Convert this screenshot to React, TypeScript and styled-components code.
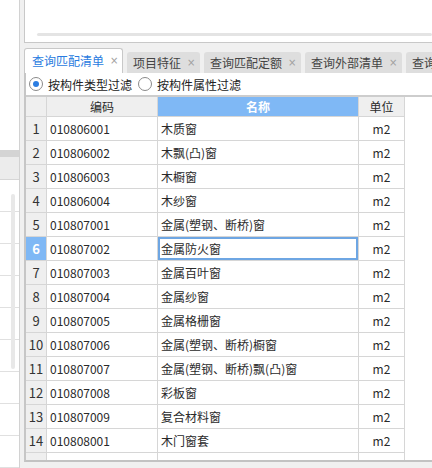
import styled, { createGlobalStyle } from 'styled-components'

const GlobalStyle = createGlobalStyle`
  html, body {
    margin: 0;
    padding: 0;
    background: #f0f0f0;
  }
  body {
    font-family: "Noto Sans CJK SC", "Noto Sans", sans-serif;
    font-size: 12px;
    color: #333;
  }
`

type Row = {
  code: string
  name: string
  unit: string
}

const rows: Row[] = [
  { code: '010806001', name: '木质窗', unit: 'm2' },
  { code: '010806002', name: '木飘(凸)窗', unit: 'm2' },
  { code: '010806003', name: '木橱窗', unit: 'm2' },
  { code: '010806004', name: '木纱窗', unit: 'm2' },
  { code: '010807001', name: '金属(塑钢、断桥)窗', unit: 'm2' },
  { code: '010807002', name: '金属防火窗', unit: 'm2' },
  { code: '010807003', name: '金属百叶窗', unit: 'm2' },
  { code: '010807004', name: '金属纱窗', unit: 'm2' },
  { code: '010807005', name: '金属格栅窗', unit: 'm2' },
  { code: '010807006', name: '金属(塑钢、断桥)橱窗', unit: 'm2' },
  { code: '010807007', name: '金属(塑钢、断桥)飘(凸)窗', unit: 'm2' },
  { code: '010807008', name: '彩板窗', unit: 'm2' },
  { code: '010807009', name: '复合材料窗', unit: 'm2' },
  { code: '010808001', name: '木门窗套', unit: 'm2' },
  { code: '', name: '', unit: '' },
]

const tabs = ['查询匹配清单', '项目特征', '查询匹配定额', '查询外部清单', '查询外部定额']

const SELECTED = 5

const Screen = styled.div`
  display: flex;
  width: 432px;
  height: 468px;
  overflow: hidden;
  gap: 4px;
`

// narrow pane cut off on the left
const LeftPane = styled.div`
  width: 19px;
  flex-shrink: 0;
  display: flex;
  flex-direction: column;
  background: #fff;
  border-right: 1px solid #d2d2d2;
`
const LeftBlank = styled.div`
  height: 152px;
`
const LeftBand = styled.div`
  height: 8px;
  background: #d4d4d4;
`
const LeftHead = styled.div`
  height: 22px;
  background: #ececec;
  border-bottom: 1px solid #d6d6d6;
`
const LeftBody = styled.div`
  position: relative;
  flex: 1;
`
const LeftLine = styled.div`
  height: 31px;
  border-bottom: 1px solid #e0e0e0;
`
const LeftScroll = styled.div`
  position: absolute;
  left: 11px;
  top: 14px;
  width: 4px;
  height: 175px;
  border-radius: 2px;
  background: #e8e8e8;
`

const MainPane = styled.div`
  flex: 1;
  display: flex;
  flex-direction: column;
  min-width: 0;
`
const TopPanel = styled.div`
  background: #fff;
  border-left: 1px solid #c8c8c8;
  border-bottom: 1px solid #c8c8c8;
  display: flex;
  align-items: flex-end;
  padding: 0 0 6px 12px;
  height: 36px;
`
const HScroll = styled.div`
  flex: 1;
  height: 3px;
  border-radius: 2px;
  background: #e4e4e4;
`

const TabBar = styled.div`
  margin-top: 5px;
  height: 25px;
  display: flex;
  align-items: flex-end;
  gap: 4px;
  white-space: nowrap;
`
const Tab = styled.div<{ $active?: boolean }>`
  flex-shrink: 0;
  display: flex;
  align-items: center;
  box-sizing: border-box;
  height: ${(p) => (p.$active ? '25px' : '21px')};
  padding: ${(p) => (p.$active ? '0 5px 2px 7px' : '0 6px 0 6px')};
  border-radius: 3px 3px 0 0;
  background: ${(p) => (p.$active ? '#fff' : '#dedede')};
  border: ${(p) => (p.$active ? '1px solid #c8c8c8' : 'none')};
  border-bottom: none;
  color: ${(p) => (p.$active ? '#2a7ce0' : '#444')};
  font-size: 12px;
`
const TabClose = styled.span`
  display: inline-block;
  width: 7px;
  margin-left: 6px;
  text-align: center;
  color: #a0a0a0;
  font-size: 10px;
  font-family: "DejaVu Sans", sans-serif;
`

const ContentPanel = styled.div`
  height: 387px;
  background: #fff;
  border-left: 2px solid #c6c6c6;
  border-bottom: 2px solid #c2c2c2;
  display: flex;
  flex-direction: column;
`
const FilterRow = styled.div`
  height: 22px;
  display: flex;
  align-items: center;
  padding-left: 3px;
  border-bottom: 2px solid #cdcdcd;
  color: #222;
  font-size: 12px;
`
const RadioLabel = styled.label`
  display: flex;
  align-items: center;
  margin-right: 6px;
`
const RadioDot = styled.span<{ $checked?: boolean }>`
  width: 12px;
  height: 12px;
  border-radius: 50%;
  border: 1px solid #8a8a8a;
  background: #fff;
  margin-right: 5px;
  display: flex;
  align-items: center;
  justify-content: center;
  &::after {
    content: '';
    width: 6px;
    height: 6px;
    border-radius: 50%;
    background: ${(p) => (p.$checked ? '#2b7de1' : 'transparent')};
  }
`

const Grid = styled.div`
  flex: 1;
  overflow: hidden;
`
const GridRow = styled.div<{ $head?: boolean }>`
  display: grid;
  grid-template-columns: 21px 111px 201px 46px;
  height: ${(p) => (p.$head ? '20px' : '24px')};
`
const Cell = styled.div<{ $align?: string; $bg?: string; $color?: string; $focus?: boolean; $bold?: boolean }>`
  box-sizing: border-box;
  display: flex;
  align-items: center;
  justify-content: ${(p) => p.$align || 'flex-start'};
  padding-left: ${(p) => (p.$align === 'center' ? '0' : '3px')};
  border-right: 1px solid #d6d6d6;
  border-bottom: 1px solid #d6d6d6;
  background: ${(p) => p.$bg || '#fff'};
  color: ${(p) => p.$color || '#2a2a2a'};
  font-weight: ${(p) => (p.$bold ? 700 : 400)};
  white-space: nowrap;
  overflow: hidden;
  box-shadow: ${(p) => (p.$focus ? 'inset 0 0 0 2px #6ea6e3' : 'none')};
`
const NumCell = styled(Cell)<{ $sel?: boolean }>`
  font-size: 13px;
  justify-content: center;
  padding: 0;
  background: ${(p) => (p.$sel ? '#7fb8f5' : '#efefef')};
  color: ${(p) => (p.$sel ? '#fff' : '#333')};
  font-weight: ${(p) => (p.$sel ? 700 : 400)};
`

export default function App() {
  return (
    <>
      <GlobalStyle />
      <Screen>
        <LeftPane>
          <LeftBlank />
          <LeftBand />
          <LeftHead />
          <LeftBody>
            {Array.from({ length: 9 }).map((_, i) => (
              <LeftLine key={i} />
            ))}
            <LeftScroll />
          </LeftBody>
        </LeftPane>

        <MainPane>
          <TopPanel>
            <HScroll />
          </TopPanel>

          <TabBar>
            {tabs.map((t, i) => (
              <Tab key={t} $active={i === 0}>
                {t}
                <TabClose>×</TabClose>
              </Tab>
            ))}
          </TabBar>

          <ContentPanel>
            <FilterRow>
              <RadioLabel>
                <RadioDot $checked />
                按构件类型过滤
              </RadioLabel>
              <RadioLabel>
                <RadioDot />
                按构件属性过滤
              </RadioLabel>
            </FilterRow>

            <Grid>
              <GridRow $head>
                <Cell $bg="#efefef" />
                <Cell $bg="#efefef" $align="center">
                  编码
                </Cell>
                <Cell $bg="#7fb8f5" $align="center" $color="#fff" $bold>
                  名称
                </Cell>
                <Cell $bg="#efefef" $align="center">
                  单位
                </Cell>
              </GridRow>
              {rows.map((r, i) => (
                <GridRow key={i}>
                  <NumCell $sel={i === SELECTED}>{r.code ? i + 1 : ''}</NumCell>
                  <Cell>{r.code}</Cell>
                  <Cell $focus={i === SELECTED}>{r.name}</Cell>
                  <Cell $align="center">{r.unit}</Cell>
                </GridRow>
              ))}
            </Grid>
          </ContentPanel>
        </MainPane>
      </Screen>
    </>
  )
}
